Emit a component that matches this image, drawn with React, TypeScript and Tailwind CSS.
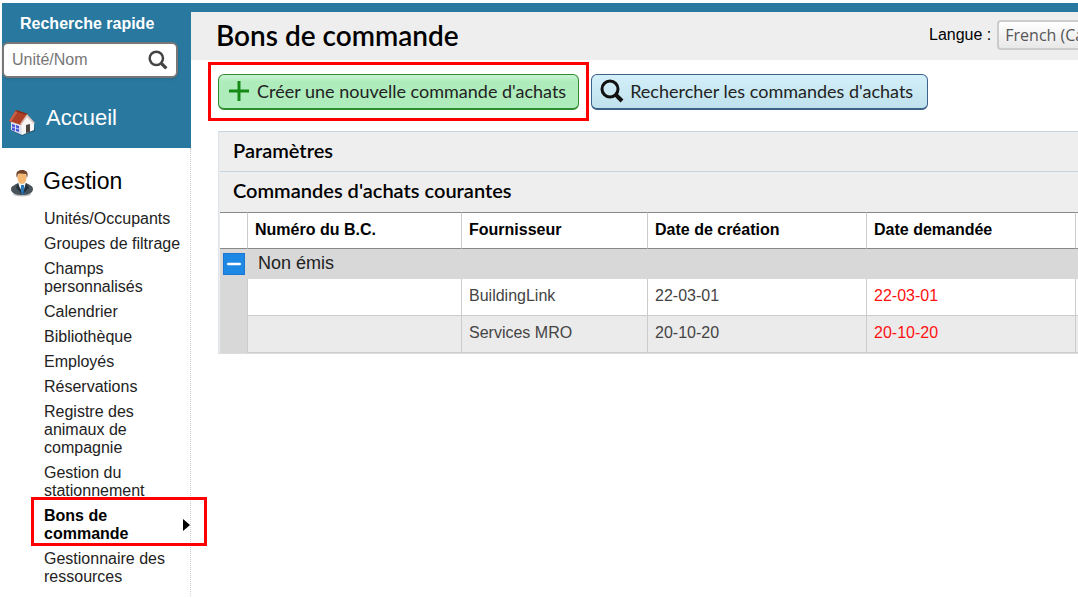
import React from 'react';
import { Minus } from 'lucide-react';

interface NavItem {
  label: string;
  active?: boolean;
}

interface Order {
  number: string;
  vendor: string;
  created: string;
  requested: string;
}

const navItems: NavItem[] = [
  { label: 'Unités/Occupants' },
  { label: 'Groupes de filtrage' },
  { label: 'Champs personnalisés' },
  { label: 'Calendrier' },
  { label: 'Bibliothèque' },
  { label: 'Employés' },
  { label: 'Réservations' },
  { label: 'Registre des animaux de compagnie' },
  { label: 'Gestion du stationnement' },
  { label: 'Bons de commande', active: true },
  { label: 'Gestionnaire des ressources' },
];

const columns = ['Numéro du B.C.', 'Fournisseur', 'Date de création', 'Date demandée'];

const orders: Order[] = [
  { number: '', vendor: 'BuildingLink', created: '22-03-01', requested: '22-03-01' },
  { number: '', vendor: 'Services MRO', created: '20-10-20', requested: '20-10-20' },
];

const HouseIcon: React.FC = () => (
  <svg className="mt-2 h-7 w-7 shrink-0" viewBox="6 4 28 28" aria-hidden="true">
    <path d="M7 26l12 6 13-5v-3z" fill="#173f54" opacity="0.5" />
    <path d="M8 15l11 4v12L8 26z" fill="#dcdff0" />
    <path d="M18 20l6-9 7 8v7l-12 5z" fill="#f8f6f5" />
    <path d="M6 17L13 6l12 4-7 11z" fill="#b03f27" />
    <path d="M6 17l7-11 2 1-7 11z" fill="#c9634a" />
    <path d="M13 6l12 4-1 1-12-4z" fill="#7f2c1b" />
    <path d="M24 10l8 9-1 1-7-7-6 8-1-1z" fill="#d9c2ba" />
    <path d="M9 20l3 1v6l-3-1zM13 21l3 1v6l-3-1z" fill="#4a55dc" />
    <path d="M9 23l7 2" stroke="#dcdff0" strokeWidth="0.8" />
    <path d="M23 21l4-1v8l-4 1z" fill="#4e4541" />
  </svg>
);

const ManagerIcon: React.FC = () => (
  <svg className="mt-1 h-7 w-6 shrink-0" viewBox="0 0 24 28" aria-hidden="true">
    <ellipse cx="12" cy="25" rx="9" ry="2.5" fill="#000" opacity="0.25" />
    <path d="M1 20c0-3 4-4 7-6h8c4 2 7 3 7 6 0 4-5 6-11 6S1 24 1 20z" fill="#48535b" />
    <path d="M8 13h8l-1 5-2 4-4-4z" fill="#eef4f8" />
    <path d="M11 16h3l1 8-2 2-2-2z" fill="#2b78bb" />
    <path d="M8 14l4 11-6-6zM16 14l-3 11 6-6z" fill="#27333b" />
    <ellipse cx="12" cy="9" rx="4.5" ry="6" fill="#f5b873" />
    <path d="M7 9C5 3 8 1 12 1s7 2 5 8l-1-4c-3 0-5-1-8 0z" fill="#70432b" />
  </svg>
);

const SearchIcon: React.FC<{ className: string; thick: number }> = ({ className, thick }) => (
  <svg className={className} viewBox="0 0 24 24" fill="none" stroke="currentColor" aria-hidden="true">
    <circle cx="10" cy="10" r="8" strokeWidth={thick} />
    <path d="M16 16l6 6" strokeWidth={thick + 1} />
  </svg>
);

const Sidebar: React.FC = () => (
  <aside className="w-[189px] shrink-0">
    <div className="bg-[#29789f] pb-3 text-white">
      <form className="pr-[13px]">
        <label htmlFor="quick-search" className="block pt-0.5 pb-2 pl-[18px] text-base leading-5 font-bold">
          Recherche rapide
        </label>
        <div className="flex h-9 items-center rounded-md border-2 border-[#777] bg-white pr-2 pl-2 shadow">
          <input
            id="quick-search"
            type="text"
            placeholder="Unité/Nom"
            className="w-full min-w-0 bg-transparent text-base text-black outline-none placeholder:text-[#777]"
          />
          <button type="button" aria-label="Rechercher" className="shrink-0 text-[#444]">
            <SearchIcon className="h-5 w-5" thick={3} />
          </button>
        </div>
      </form>
      <a href="#accueil" className="mt-[22px] flex items-center gap-[9px] pl-[7px] text-[22px] leading-8">
        <HouseIcon />
        Accueil
      </a>
    </div>
    <nav className="border-r border-dotted border-[#ccc] pt-[17px] pb-1.5">
      <h2 className="flex items-center gap-[9px] pl-2 text-[23px] leading-8">
        <ManagerIcon />
        Gestion
      </h2>
      <ul className="mt-2.5 text-base leading-[18px] text-[#222]">
        {navItems.map(item => (
          <li key={item.label} className="relative">
            <a
              href="#gestion"
              aria-current={item.active ? 'page' : undefined}
              className={`flex items-center pt-[3px] pb-1 pl-[42px] ${item.active ? 'font-bold text-black' : 'pr-1'}`}
            >
              <span className="flex-1">{item.label}</span>
              {item.active && (
                <svg className="ml-8 h-3 w-2 shrink-0" viewBox="0 0 8 12" aria-hidden="true">
                  <path d="M1 0l7 6-7 6z" fill="#000" />
                </svg>
              )}
            </a>
            {item.active && (
              <span className="pointer-events-none absolute -top-[7px] -right-[17px] bottom-px left-[29px] border-3 border-[#f00]" />
            )}
          </li>
        ))}
      </ul>
    </nav>
  </aside>
);

const OrdersTable: React.FC = () => (
  <table className="w-[860px] table-fixed border-separate border-spacing-0 text-left text-base">
    <colgroup>
      <col className="w-7" />
      <col className="w-[214px]" />
      <col className="w-[186px]" />
      <col className="w-[219px]" />
      <col className="w-[209px]" />
      <col />
    </colgroup>
    <thead>
      <tr className="h-[37px] bg-white">
        <th className="border-y border-r border-y-[#888] border-r-[#ccc]" />
        {columns.map(column => (
          <th key={column} className="border-y border-r border-y-[#888] border-r-[#ccc] px-[7px] pb-px font-bold">
            {column}
          </th>
        ))}
        <th className="border-y border-[#888]" />
      </tr>
    </thead>
    <tbody>
      <tr className="h-[30px] bg-[#d8d8d8]">
        <td className="pl-[3px]">
          <button type="button" aria-label="Réduire" className="flex h-[22px] w-[22px] items-center justify-center border border-[#1976d2] bg-[#1e88e5] text-white">
            <Minus className="h-5 w-5" strokeWidth={3} />
          </button>
        </td>
        <td colSpan={5} className="pb-0.5 pl-2.5 text-lg leading-6 text-[#222]">Non émis</td>
      </tr>
      {orders.map((order, i) => (
        <tr key={order.vendor} className={`h-[37px] text-[#444] ${i % 2 ? 'bg-[#ebebeb]' : 'bg-white'}`}>
          <td className="border-r border-[#ccc] bg-[#d8d8d8]" />
          <td className="border-r border-b border-[#ccc] px-[7px] pb-0.5">{order.number}</td>
          <td className="border-r border-b border-[#ccc] px-[7px] pb-0.5">{order.vendor}</td>
          <td className="border-r border-b border-[#ccc] px-[7px] pb-0.5">{order.created}</td>
          <td className="border-r border-b border-[#ccc] px-[7px] pb-0.5 text-[#f11]">{order.requested}</td>
          <td className="border-b border-[#ccc]" />
        </tr>
      ))}
    </tbody>
  </table>
);

const App: React.FC = () => {
  return (
    <div className="min-h-screen overflow-hidden bg-white pt-[3px] pl-0.5 font-['Liberation_Sans',Arial,sans-serif] text-black">
      <div className="h-[9px] bg-[#29789f]" />
      <div className="flex">
        <Sidebar />
        <main className="min-w-0 flex-1 overflow-hidden">
          <header className="flex h-12 items-center justify-between bg-[#eee] pl-[25px]">
            <h1 className="pb-0.5 font-['Lato',sans-serif] text-[28px] leading-8 font-semibold">Bons de commande</h1>
            <div className="flex w-[149px] shrink-0 items-center gap-1.5 pb-0.5">
              <label htmlFor="language" className="shrink-0 text-base">Langue :</label>
              <select
                id="language"
                className="h-[30px] w-[160px] shrink-0 appearance-none rounded border-2 border-[#ccc] bg-linear-to-b from-white to-[#e8e8e8] px-1.5 font-['Open_Sans',sans-serif] text-base text-[#555]"
              >
                <option>French (Canada)</option>
              </select>
            </div>
          </header>
          <div className="flex items-center gap-0.5 pt-0.5 pl-[17px] font-['Lato',sans-serif] text-lg text-[#222]">
            <div className="border-3 border-[#f00] px-[7px] pt-[9px] pb-2">
              <button type="button" className="flex h-9 items-center gap-2 rounded-md border border-b-2 border-[#2e8b2e] bg-linear-to-b from-[#c9f3d2] via-[#aeecbc] via-20% to-[#aeecbc] pr-3 pb-px pl-2.5">
                <svg className="h-5 w-5" viewBox="0 0 20 20" stroke="#158a15" strokeWidth="3" aria-hidden="true">
                  <path d="M10 0v20M0 10h20" />
                </svg>
                Créer une nouvelle commande d'achats
              </button>
            </div>
            <button type="button" className="flex h-9 items-center gap-1.5 rounded-md border border-b-2 border-[#3d6189] bg-linear-to-b from-[#d3effa] to-[#bfe2ec] pr-3.5 pl-2">
              <SearchIcon className="h-6 w-6 text-[#111]" thick={3} />
              Rechercher les commandes d'achats
            </button>
          </div>
          <section className="mt-[10px] ml-[27px] border-t border-b border-l border-t-[#c3d4e2] border-b-[#ddd] border-l-[#dde3ea] bg-[#eee] pl-px font-['Liberation_Sans',Arial,sans-serif]">
            <h2 className="border-b border-[#c3d4e2] pb-[3px] pl-[13px] font-['Lato',sans-serif] text-xl leading-9 font-semibold">Paramètres</h2>
            <h2 className="pb-1 pl-[13px] font-['Lato',sans-serif] text-xl leading-9 font-semibold">Commandes d'achats courantes</h2>
            <OrdersTable />
          </section>
        </main>
      </div>
    </div>
  );
};

export default App;
